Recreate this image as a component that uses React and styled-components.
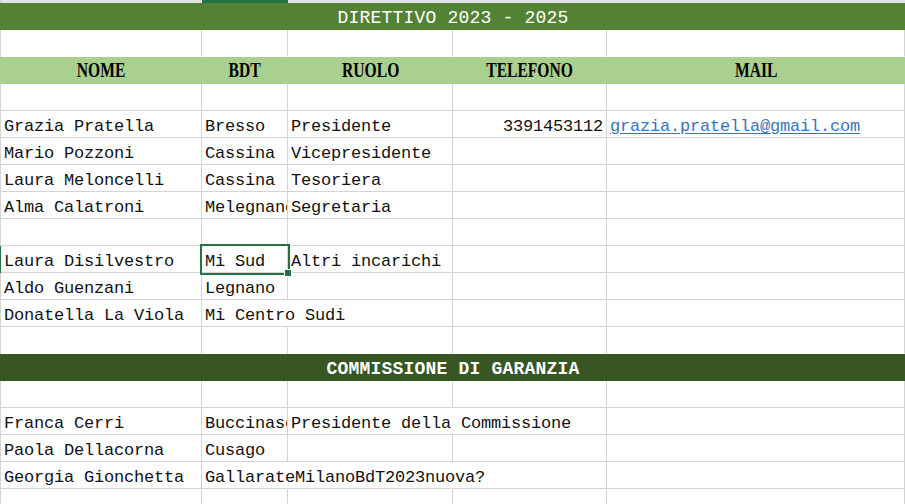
import React from 'react';
import styled, { createGlobalStyle, css } from 'styled-components';

const GRID = '#d4d4d4';
const SELECT = '#217346';
const COLUMNS = '201px 86px 165px 154px 298px';

const GlobalStyle = createGlobalStyle`
  body {
    margin: 0;
    background: #fff;
  }
`;

const Sheet = styled.div`
  width: 905px;
  height: 504px;
  overflow: hidden;
  font-family: "Liberation Mono", "Noto Sans CJK SC", monospace;
  font-size: 17px;
  letter-spacing: -0.2px;
  color: #111;
`;

const ColumnStrip = styled.div`
  display: grid;
  grid-template-columns: ${COLUMNS};
  height: 3px;
  border-left: 1px solid ${GRID};
  background: #e2e2e2;
`;

const StripCell = styled.div`
  background: ${p => (p.$active ? SELECT : 'transparent')};
`;

const Row = styled.div`
  display: grid;
  grid-template-columns: ${COLUMNS};
  height: 27px;
  border-left: 1px solid ${p => (p.$active ? SELECT : GRID)};
`;

const Cell = styled.div`
  box-sizing: border-box;
  height: 27px;
  padding: 6px 3px 0;
  line-height: 19px;
  white-space: nowrap;
  overflow: ${p => (p.$spill || p.$selected ? 'visible' : 'hidden')};
  text-align: ${p => p.$align || 'left'};
  border-right: 1px solid ${p => (p.$open ? 'transparent' : GRID)};
  border-bottom: 1px solid ${p => (p.$flat ? 'transparent' : GRID)};
  ${p =>
    p.$selected &&
    css`
      position: relative;
      &::after {
        content: '';
        position: absolute;
        top: -2px;
        left: -2px;
        right: -3px;
        bottom: -3px;
        border: 2px solid ${SELECT};
        z-index: 2;
      }
      &::before {
        content: '';
        position: absolute;
        right: -4px;
        bottom: -4px;
        width: 6px;
        height: 6px;
        background: ${SELECT};
        box-shadow: 0 0 0 1px #fff;
        z-index: 3;
      }
    `}
`;

const Band = styled.div`
  height: 27px;
  box-sizing: border-box;
  padding-top: 5px;
  line-height: 20px;
  text-align: center;
  color: #fff;
  font-size: 18px;
  letter-spacing: 0.2px;
  font-weight: ${p => (p.$bold ? 700 : 400)};
  background: ${p => p.$bg};
  border-left: 1px solid ${p => p.$bg};
`;

const HeadRow = styled.div`
  display: grid;
  grid-template-columns: ${COLUMNS};
  height: 27px;
  background: #a9d08e;
  border-left: 1px solid #a9d08e;
`;

const HeadCell = styled.div`
  box-sizing: border-box;
  padding-top: 2px;
  line-height: 23px;
  text-align: center;
`;

const HeadLabel = styled.span`
  display: inline-block;
  font-family: "Liberation Serif", "Noto Sans CJK SC", serif;
  font-weight: 700;
  font-size: 20px;
  letter-spacing: 0;
  color: #000;
  transform: scaleX(0.78);
`;

const Mail = styled.a`
  color: #3b73ba;
  text-decoration: underline;
  text-underline-offset: 2px;
`;

const heads = ['NOME', 'BDT', 'RUOLO', 'TELEFONO', 'MAIL'];

// one entry per spreadsheet row
const rows = [
  { band: 'DIRETTIVO 2023 - 2025', bg: '#548235' },
  { flat: true },
  { head: true },
  {},
  {
    cells: [
      'Grazia Pratella',
      'Bresso',
      'Presidente',
      { text: '3391453112', align: 'right' },
      { mail: 'grazia.pratella@gmail.com' },
    ],
  },
  { cells: ['Mario Pozzoni', 'Cassina', 'Vicepresidente'] },
  { cells: ['Laura Meloncelli', 'Cassina', 'Tesoriera'] },
  { cells: ['Alma Calatroni', 'Melegnano', 'Segretaria'] },
  {},
  { active: true, cells: ['Laura Disilvestro', { text: 'Mi Sud', selected: true }, 'Altri incarichi'] },
  { cells: ['Aldo Guenzani', 'Legnano'] },
  { cells: ['Donatella La Viola', { text: 'Mi Centro Sudi', spill: 1 }] },
  { flat: true },
  { band: 'COMMISSIONE DI GARANZIA', bg: '#375623', bold: true },
  {},
  { cells: ['Franca Cerri', 'Buccinasco', { text: 'Presidente della Commissione', spill: 1 }] },
  { cells: ['Paola Dellacorna', 'Cusago'] },
  { cells: ['Georgia Gionchetta', { text: 'GallarateMilanoBdT2023nuova?', spill: 2 }] },
  {},
  {},
];

const renderRow = (row, i) => {
  if (row.band) {
    return (
      <Band key={i} $bg={row.bg} $bold={row.bold}>
        {row.band}
      </Band>
    );
  }
  if (row.head) {
    return (
      <HeadRow key={i}>
        {heads.map(h => (
          <HeadCell key={h}>
            <HeadLabel>{h}</HeadLabel>
          </HeadCell>
        ))}
      </HeadRow>
    );
  }
  const cells = (row.cells || []).map(c => (typeof c === 'string' ? { text: c } : c));
  let openUntil = -1;
  const out = [];
  for (let col = 0; col < 5; col++) {
    const c = cells[col] || {};
    if (c.spill) openUntil = col + c.spill - 1;
    out.push(
      <Cell
        key={col}
        $align={c.align}
        $spill={!!c.spill}
        $open={col <= openUntil}
        $selected={c.selected}
        $flat={row.flat}
      >
        {c.mail ? <Mail href={`mailto:${c.mail}`}>{c.mail}</Mail> : c.text}
      </Cell>
    );
  }
  return (
    <Row key={i} $active={row.active}>
      {out}
    </Row>
  );
};

const App = () => (
  <>
    <GlobalStyle />
    <Sheet>
      <ColumnStrip>
        {[0, 1, 2, 3, 4].map(i => (
          <StripCell key={i} $active={i === 1} />
        ))}
      </ColumnStrip>
      {rows.map(renderRow)}
    </Sheet>
  </>
);

export default App;
